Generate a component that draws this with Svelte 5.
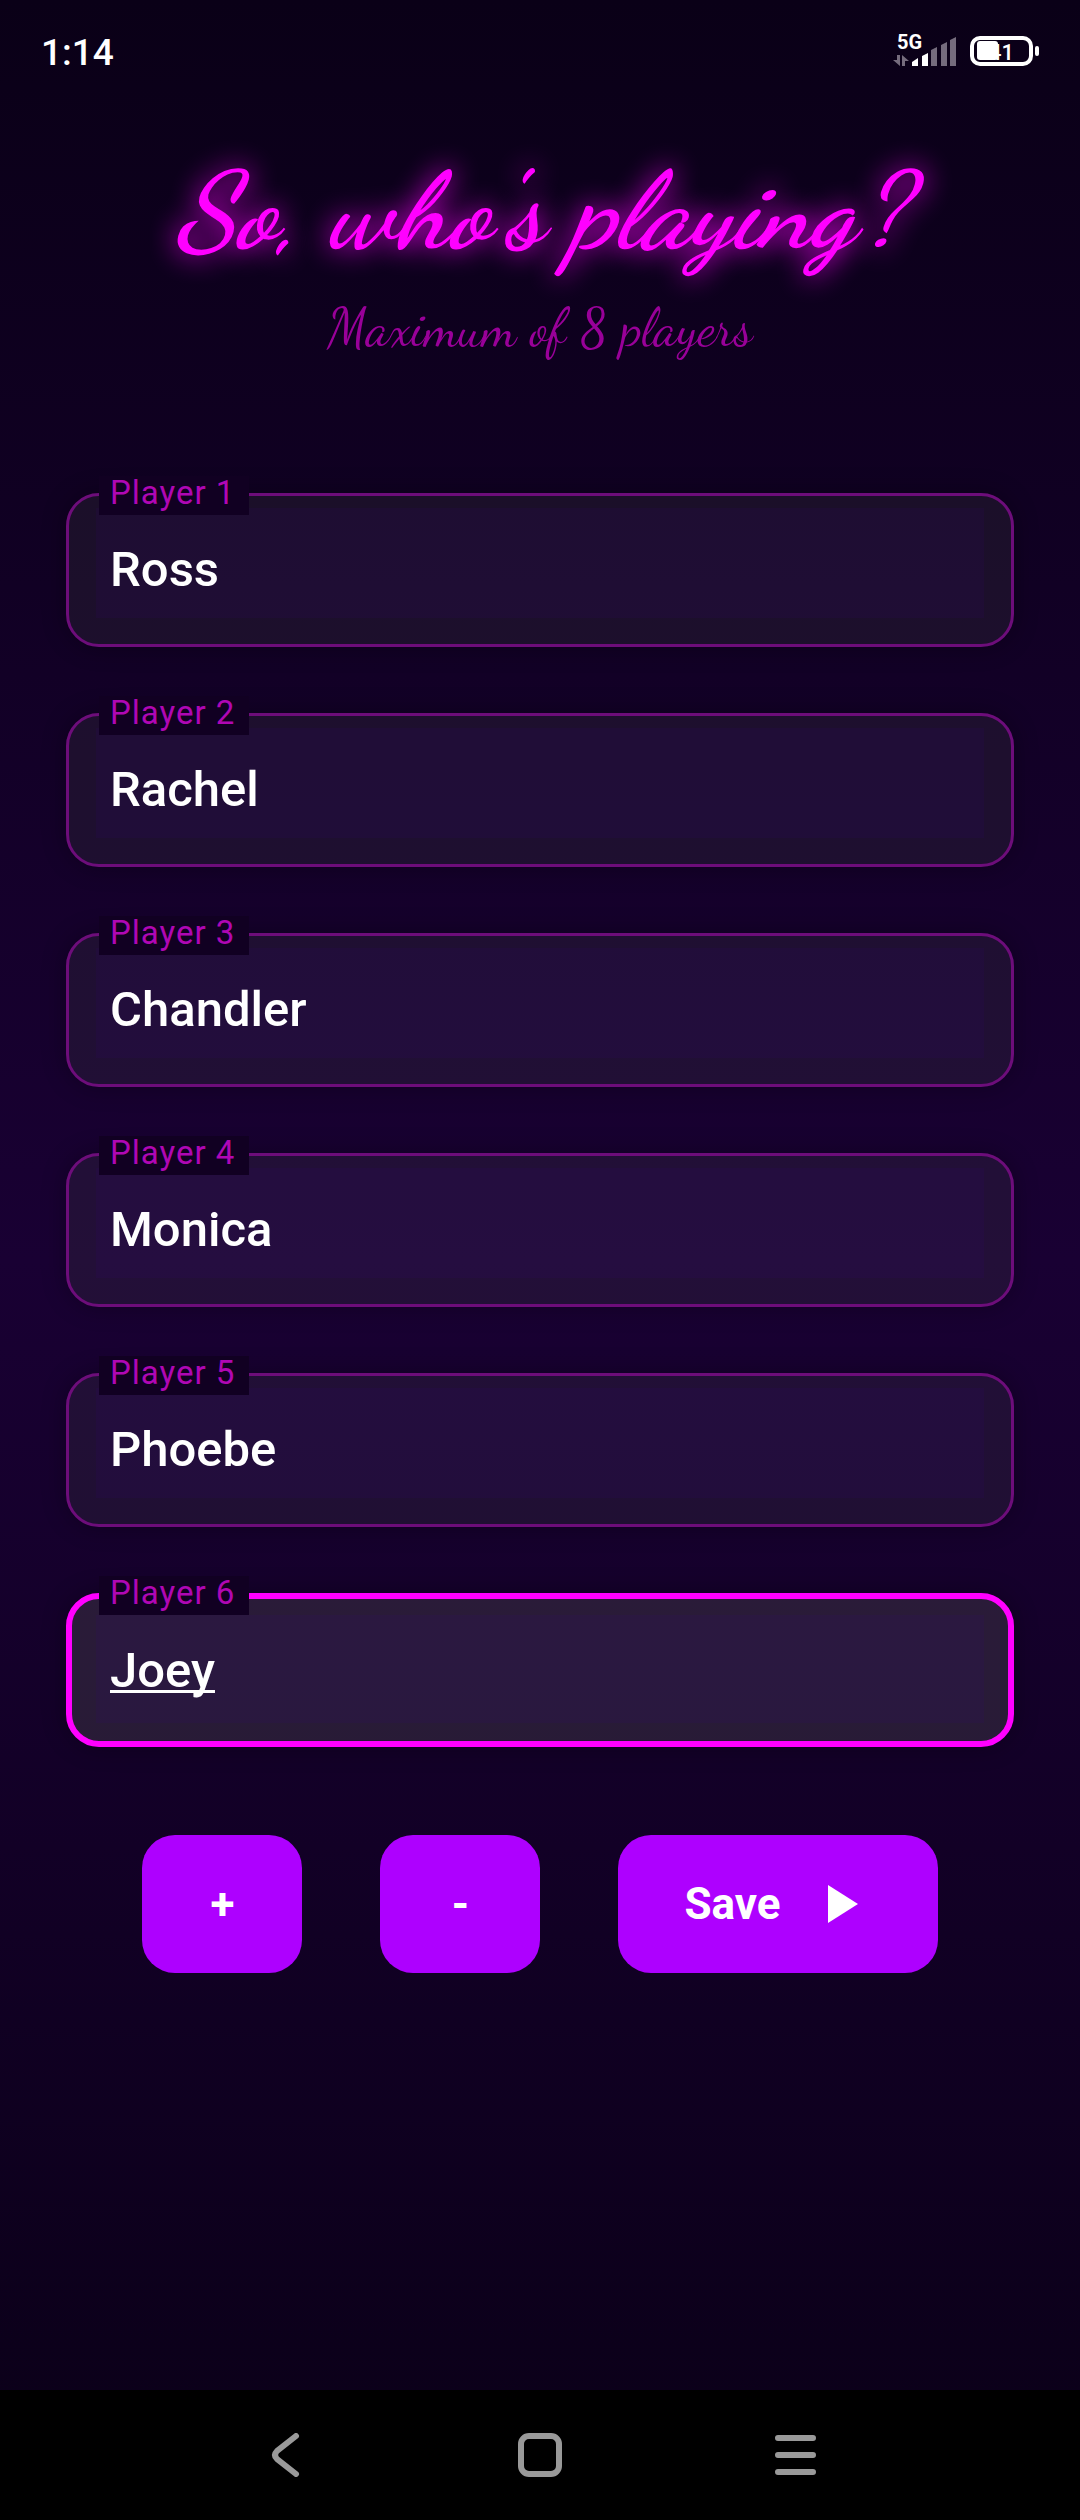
<script>
  let players = $state(['Ross', 'Rachel', 'Chandler', 'Monica', 'Phoebe', 'Joey']);
  let active = $state(5);

  const maxPlayers = 8;

  function addPlayer() {
    if (players.length < maxPlayers) players.push('');
  }

  function removePlayer() {
    if (players.length > 1) players.pop();
  }
</script>

<div class="screen">
  <header class="status-bar">
    <span class="time">1:14</span>
    <div class="status-icons">
      <svg class="signal" width="64" height="46" viewBox="0 -5 64 46" aria-label="5G signal">
        <text x="4" y="16" class="network">5G</text>
        <g fill="#756c7d">
          <path d="M4 22h3v11L0 27h4zM9 33V22l7 6h-4v5z" />
          <path d="M38 33V17l6-3v19zM48 33V12l6-3v24zM57 33V7l6-3v29z" />
        </g>
        <path d="M19 33v-4l6-4v8zM29 33V23l6-3v13z" fill="#fff" />
      </svg>
      <svg class="battery" width="70" height="30" viewBox="0 0 70 30" aria-label="Battery 41%">
        <rect x="2" y="2" width="59" height="26" rx="8" fill="none" stroke="#fff" stroke-width="4" />
        <text x="19" y="24" class="percent">41</text>
        <rect x="7" y="5" width="21" height="19" rx="3" fill="#fff" />
        <rect x="65" y="10" width="4" height="10" rx="2" fill="#fff" />
      </svg>
    </div>
  </header>

  <main>
    <h1>So, who's playing?</h1>
    <p class="subtitle">Maximum of {maxPlayers} players</p>

    <form class="players" onsubmit={(e) => e.preventDefault()}>
      {#each players as name, i}
        <div class="field" class:active={active === i}>
          <label for="player-{i}">Player {i + 1}</label>
          <input
            id="player-{i}"
            type="text"
            autocomplete="off"
            spellcheck="false"
            bind:value={players[i]}
            onfocus={() => (active = i)}
          />
        </div>
      {/each}

      <div class="actions">
        <button type="button" onclick={addPlayer}>+</button>
        <button type="button" onclick={removePlayer}>-</button>
        <button type="submit" class="save">
          Save
          <svg width="30" height="38" viewBox="0 0 30 38" aria-hidden="true">
            <path d="M0 0l30 19L0 38z" fill="#fff" />
          </svg>
        </button>
      </div>
    </form>
  </main>

  <nav class="nav-bar">
    <button type="button" aria-label="Back">
      <svg width="44" height="44" viewBox="0 0 44 44">
        <path d="M34 3L15 18q-4 4 0 8L34 41" />
      </svg>
    </button>
    <button type="button" aria-label="Home">
      <svg width="44" height="44" viewBox="0 0 44 44">
        <rect x="3" y="3" width="38" height="38" rx="8" />
      </svg>
    </button>
    <button type="button" aria-label="Recent apps">
      <svg width="44" height="44" viewBox="0 0 44 44">
        <path d="M4 5h35M4 22h35M4 39h35" />
      </svg>
    </button>
  </nav>
</div>

<style>
  :global(body) {
    margin: 0;
    background: #000;
  }

  .screen {
    display: flex;
    flex-direction: column;
    min-height: 100vh;
    color: #fff;
    font-family: Roboto, 'Liberation Sans', sans-serif;
    background: linear-gradient(#0a0017, #190033 50%, #0a0017);
  }

  .status-bar {
    display: flex;
    align-items: center;
    justify-content: space-between;
    height: 102px;
    padding: 0 40px 0 41px;
  }

  .time {
    padding-top: 3px;
    font-size: 37px;
    font-weight: 500;
  }

  .status-icons {
    display: flex;
    align-items: center;
    gap: 13px;
  }

  .network {
    font-size: 20px;
    font-weight: 700;
    fill: #fff;
  }

  .percent {
    font-size: 22px;
    font-weight: 500;
    fill: #fff;
  }

  main {
    flex: 1;
    padding: 0 66px;
  }

  h1,
  .subtitle {
    margin: 0;
    text-align: center;
    font-family: 'Dancing Script', cursive;
    font-weight: 400;
  }

  h1 {
    padding-top: 50px;
    font-size: 108px;
    font-style: italic;
    font-weight: 700;
    line-height: 120px;
    color: #f0f;
    text-shadow: 0 0 28px #f0f;
  }

  .subtitle {
    padding-top: 26px;
    font-size: 53px;
    line-height: 60px;
    color: #990099;
  }

  .players {
    display: flex;
    flex-direction: column;
    gap: 66px;
    padding-top: 135px;
  }

  .field {
    position: relative;
    display: flex;
    box-sizing: border-box;
    height: 154px;
    padding: 12px 27px 26px;
    border: 3px solid #6d0d7a;
    border-radius: 33px;
    background: rgba(130, 150, 110, 0.1);
    box-shadow: 0 0 24px rgba(0, 0, 0, 0.3);
  }

  .field.active {
    padding: 16px 24px 18px;
    border: 6px solid #f0f;
    background: rgba(170, 190, 140, 0.14);
  }

  /* sits over the top border of its field */
  label {
    position: absolute;
    top: -20px;
    left: 30px;
    padding: 0 14px 6px 11px;
    background: #110022;
    color: #b007b4;
    font-size: 33px;
    line-height: 33px;
    letter-spacing: 1px;
  }

  .field.active label {
    top: -23px;
    left: 27px;
  }

  input {
    flex: 1;
    min-width: 0;
    padding: 13px 14px 0;
    border: none;
    outline: none;
    background: rgba(60, 0, 140, 0.1);
    color: #fff;
    font: inherit;
    font-size: 49px;
    font-weight: 500;
  }

  .field.active input {
    padding-top: 2px;
    text-decoration: underline;
    text-decoration-thickness: 3px;
    text-underline-offset: 3px;
    text-decoration-skip-ink: none;
  }

  .actions {
    display: flex;
    justify-content: center;
    gap: 78px;
    padding-top: 22px;
  }

  .actions button {
    display: flex;
    align-items: center;
    justify-content: center;
    min-width: 160px;
    height: 138px;
    padding: 0 66px;
    border: none;
    border-radius: 33px;
    background: #ae00ff;
    color: #fff;
    font: inherit;
    font-size: 44px;
    font-weight: 700;
    cursor: pointer;
  }

  .actions .save {
    gap: 47px;
    padding-right: 80px;
  }

  .nav-bar {
    display: flex;
    align-items: center;
    justify-content: center;
    gap: 212px;
    height: 130px;
    background: #000;
  }

  .nav-bar button {
    display: flex;
    padding: 0;
    border: none;
    background: none;
    cursor: pointer;
  }

  .nav-bar svg {
    fill: none;
    stroke: #999;
    stroke-width: 6;
    stroke-linecap: round;
  }
</style>
